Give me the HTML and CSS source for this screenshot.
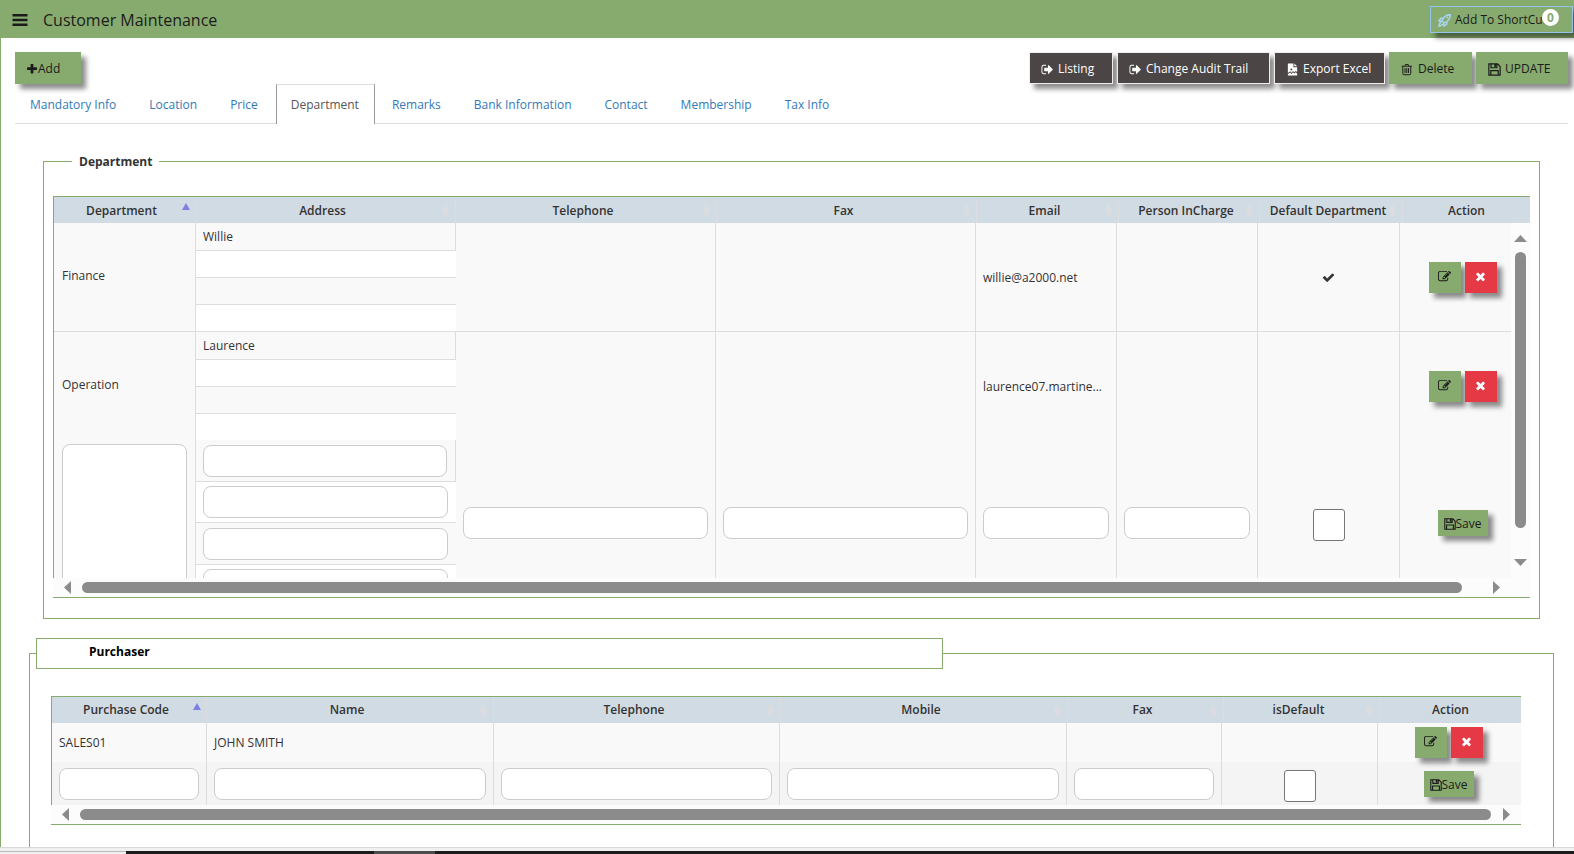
FILE: index.html
```
<!DOCTYPE html>
<html lang="en">
<head>
    <meta charset="UTF-8">
    <meta name="viewport" content="width=device-width, initial-scale=1.0">
    <title>Customer Maintenance</title>
    <link rel="stylesheet" href="styles.css">
</head>
<body>
    <!-- icon set -->
    <svg class="icon-defs" aria-hidden="true">
        <symbol id="i-bars" viewBox="0 0 16 14"><path d="M0.5 1h15v2.4h-15zM0.5 5.8h15v2.4h-15zM0.5 10.6h15V13h-15z"/></symbol>
        <symbol id="i-plus" viewBox="192 192 1408 1408"><path d="M1600 736v192q0 40-28 68t-68 28h-416v416q0 40-28 68t-68 28h-192q-40 0-68-28t-28-68v-416h-416q-40 0-68-28t-28-68v-192q0-40 28-68t68-28h416v-416q0-40 28-68t68-28h192q40 0 68 28t28 68v416h416q40 0 68 28t28 68z"/></symbol>
        <symbol id="i-times" viewBox="0 0 1792 1792"><path d="M1490 1322q0 40-28 68l-136 136q-28 28-68 28t-68-28l-294-294-294 294q-28 28-68 28t-68-28l-136-136q-28-28-28-68t28-68l294-294-294-294q-28-28-28-68t28-68l136-136q28-28 68-28t68 28l294 294 294-294q28-28 68-28t68 28l136 136q28 28 28 68t-28 68l-294 294 294 294q28 28 28 68z"/></symbol>
        <symbol id="i-check" viewBox="0 0 1792 1792"><path d="M1671 566q0 40-28 68l-724 724-136 136q-28 28-68 28t-68-28l-136-136-362-362q-28-28-28-68t28-68l136-136q28-28 68-28t68 28l294 295 656-657q28-28 68-28t68 28l136 136q28 28 28 68z"/></symbol>
        <symbol id="i-signout" viewBox="0 0 1792 1792"><path d="M704 1440q0 4 1 20t.5 26.5-3 23.5-10 19.5-20.5 6.5h-320q-119 0-203.5-84.5t-84.5-203.5v-704q0-119 84.500-203.500t203.500-84.500h320q13 0 22.500 9.500t9.500 22.500q0 4 1 20t.5 26.500-3 23.500-10 19.500-20.500 6.500h-320q-66 0-113 47t-47 113v704q0 66 47 113t113 47h312l11.500 1 11.500 3 8 5.500 7 9 2 13.500zm928-544q0 26-19 45l-544 544q-19 19-45 19t-45-19-19-45v-288h-448q-26 0-45-19t-19-45v-384q0-26 19-45t45-19h448v-288q0-26 19-45t45-19 45 19l544 544q19 19 19 45z"/></symbol>
        <symbol id="i-edit" viewBox="0 0 1792 1792"><path d="M888 1184l116-116-152-152-116 116v56h96v96h56zm440-720q-16-16-33 1l-350 350q-17 17-1 33t33-1l350-350q17-17 1-33zm80 594v190q0 119-84.500 203.500t-203.500 84.500h-832q-119 0-203.500-84.500t-84.500-203.500v-832q0-119 84.500-203.500t203.500-84.500h832q63 0 117 25 15 7 18 23 3 17-9 29l-49 49q-14 14-32 8-23-6-45-6h-832q-66 0-113 47t-47 113v832q0 66 47 113t113 47h832q66 0 113-47t47-113v-126q0-13 9-22l64-64q15-15 35-7t20 29zm-96-738l288 288-672 672h-288v-288zm444 132l-92 92-288-288 92-92q28-28 68-28t68 28l152 152q28 28 28 68t-28 68z"/></symbol>
        <symbol id="i-save" viewBox="0 0 12 12"><path fill="none" stroke="currentColor" stroke-width="1.1" d="M.8.8h8l2.400 2.400v8H.8zM2.800.8v3.600h5.400V.8M2.600 11.200V7h6.800v4.200"/><path d="M5.800 1h1.700v2.600H5.800z"/></symbol>
        <symbol id="i-trash" viewBox="0 -0.500 13.500 13"><path fill="none" stroke="currentColor" d="M.6 2.600h10.800M4 2.400l.6-1.600h2.800L8 2.400M1.900 2.800v7.400q0 1.200 1 1.200h6.200q1 0 1-1.200V2.800M4.200 4.600v5M6 4.600v5M7.800 4.600v5"/></symbol>
        <symbol id="i-file" viewBox="0 0 12 14"><path d="M1 .5h6v4h4v5.200L9.500 8.500 8 10 6.500 8.700 5 10.500 3.500 9 1 10.800zM8 .5l3 3H8zM1 12l2.500-1.800L5 11.800 6.500 10 8 11.400 9.500 10 11 11.200v2.300H1z"/><circle cx="4.800" cy="7" r="1" fill="#4b4545"/></symbol>
        <symbol id="i-rocket" viewBox="0 0 14 14"><path fill="none" stroke="currentColor" stroke-width="1.600" d="M13.200.8q-4.600-.2-7.400 3.800L4.200 7.400l2.400 2.400 2.800-1.600q4-2.800 3.800-7.400zM5.800 4.600H3L.9 7.700l3.200.2M9.400 8.200V11l-3.100 2.100-.2-3.200M3.400 9.200Q1.400 9.600 1 13q3.400-.4 3.800-2.400"/><circle cx="10.200" cy="3.800" r="1.100"/></symbol>
    </svg>

    <header class="topbar">
        <button class="menu-btn" aria-label="Menu"><svg class="icon-menu"><use href="#i-bars"/></svg></button>
        <h1>Customer Maintenance</h1>
        <button class="shortcut-btn">
            <svg class="icon rocket"><use href="#i-rocket"/></svg>Add To ShortCut
            <span class="badge">0</span>
        </button>
    </header>

    <main class="page">
        <div class="toolbar">
            <button class="btn btn-add"><svg class="icon-plus"><use href="#i-plus"/></svg>Add</button>
            <div class="toolbar-right">
                <button class="btn btn-dark btn-listing"><svg class="icon"><use href="#i-signout"/></svg>Listing</button>
                <button class="btn btn-dark btn-audit"><svg class="icon"><use href="#i-signout"/></svg>Change Audit Trail</button>
                <button class="btn btn-dark btn-export"><svg class="icon"><use href="#i-file"/></svg>Export Excel</button>
                <button class="btn btn-delete"><svg class="icon"><use href="#i-trash"/></svg>Delete</button>
                <button class="btn btn-update"><svg class="icon"><use href="#i-save"/></svg>UPDATE</button>
            </div>
        </div>

        <nav class="tabs">
            <a href="#">Mandatory Info</a>
            <a href="#">Location</a>
            <a href="#">Price</a>
            <a href="#" class="active">Department</a>
            <a href="#">Remarks</a>
            <a href="#">Bank Information</a>
            <a href="#">Contact</a>
            <a href="#">Membership</a>
            <a href="#">Tax Info</a>
        </nav>

        <!-- Department -->
        <fieldset class="group department">
            <legend>Department</legend>
            <div class="grid">
                <table class="grid-head">
                    <colgroup>
                        <col class="w142"><col class="w260"><col class="w261"><col class="w260">
                        <col class="w142"><col class="w141"><col class="w143"><col class="w127">
                    </colgroup>
                    <tr>
                        <th class="sorted">Department</th>
                        <th>Address</th>
                        <th>Telephone</th>
                        <th>Fax</th>
                        <th>Email</th>
                        <th>Person InCharge</th>
                        <th>Default Department</th>
                        <th class="no-sort">Action</th>
                    </tr>
                </table>
                <div class="grid-body">
                    <div class="grid-view">
                        <table class="grid-rows">
                            <colgroup>
                                <col class="w142"><col class="w260"><col class="w260"><col class="w260">
                                <col class="w141"><col class="w141"><col class="w142"><col class="w127">
                            </colgroup>
                            <tr class="lined">
                                <td class="name">Finance</td>
                                <td class="address">
                                    <div class="line">Willie</div>
                                    <div class="line"></div>
                                    <div class="line"></div>
                                    <div class="line"></div>
                                </td>
                                <td></td>
                                <td></td>
                                <td class="mail">willie@a2000.net</td>
                                <td></td>
                                <td class="center"><svg class="icon"><use href="#i-check"/></svg></td>
                                <td class="action">
                                    <div class="actions">
                                        <button class="btn-icon edit" aria-label="Edit"><svg class="icon"><use href="#i-edit"/></svg></button>
                                        <button class="btn-icon remove" aria-label="Remove"><svg class="icon"><use href="#i-times"/></svg></button>
                                    </div>
                                </td>
                            </tr>
                            <tr>
                                <td class="name">Operation</td>
                                <td class="address">
                                    <div class="line">Laurence</div>
                                    <div class="line"></div>
                                    <div class="line"></div>
                                    <div class="line"></div>
                                </td>
                                <td></td>
                                <td></td>
                                <td class="mail">laurence07.martine...</td>
                                <td></td>
                                <td></td>
                                <td class="action">
                                    <div class="actions">
                                        <button class="btn-icon edit" aria-label="Edit"><svg class="icon"><use href="#i-edit"/></svg></button>
                                        <button class="btn-icon remove" aria-label="Remove"><svg class="icon"><use href="#i-times"/></svg></button>
                                    </div>
                                </td>
                            </tr>
                            <tr class="entry">
                                <td class="wide"><textarea class="field tall" aria-label="Department"></textarea></td>
                                <td class="address">
                                    <div class="line"><input type="text" class="field" aria-label="Address 1"></div>
                                    <div class="line"><input type="text" class="field" aria-label="Address 2"></div>
                                    <div class="line"><input type="text" class="field" aria-label="Address 3"></div>
                                    <div class="line"><input type="text" class="field" aria-label="Address 4"></div>
                                </td>
                                <td><input type="text" class="field" aria-label="Telephone"></td>
                                <td><input type="text" class="field" aria-label="Fax"></td>
                                <td><input type="text" class="field" aria-label="Email"></td>
                                <td><input type="text" class="field" aria-label="Person InCharge"></td>
                                <td class="center"><input type="checkbox" class="check" aria-label="Default Department"></td>
                                <td class="action"><button class="btn-save"><svg class="icon-save"><use href="#i-save"/></svg>Save</button></td>
                            </tr>
                        </table>
                    </div>
                    <div class="vscroll"><i class="arrow up"></i><i class="thumb"></i><i class="arrow down"></i></div>
                </div>
                <div class="hscroll"><i class="arrow left"></i><i class="thumb"></i><i class="arrow right"></i></div>
            </div>
        </fieldset>

        <!-- Purchaser -->
        <fieldset class="group purchaser">
            <legend>Purchaser</legend>
            <div class="grid">
                <table class="grid-head">
                    <colgroup>
                        <col class="w155"><col class="w287"><col class="w287"><col class="w287">
                        <col class="w156"><col class="w156"><col class="w141">
                    </colgroup>
                    <tr>
                        <th class="sorted">Purchase Code</th>
                        <th>Name</th>
                        <th>Telephone</th>
                        <th>Mobile</th>
                        <th>Fax</th>
                        <th>isDefault</th>
                        <th class="no-sort">Action</th>
                    </tr>
                </table>
                <table class="grid-rows">
                    <colgroup>
                        <col class="w155"><col class="w287"><col class="w286"><col class="w287">
                        <col class="w155"><col class="w156"><col class="w143">
                    </colgroup>
                    <tr class="person">
                        <td>SALES01</td>
                        <td>JOHN SMITH</td>
                        <td></td>
                        <td></td>
                        <td></td>
                        <td></td>
                        <td class="action">
                            <div class="actions">
                                <button class="btn-icon edit" aria-label="Edit"><svg class="icon"><use href="#i-edit"/></svg></button>
                                <button class="btn-icon remove" aria-label="Remove"><svg class="icon"><use href="#i-times"/></svg></button>
                            </div>
                        </td>
                    </tr>
                    <tr class="new-person">
                        <td><input type="text" class="field" aria-label="Purchase Code"></td>
                        <td><input type="text" class="field" aria-label="Name"></td>
                        <td><input type="text" class="field" aria-label="Telephone"></td>
                        <td><input type="text" class="field" aria-label="Mobile"></td>
                        <td><input type="text" class="field" aria-label="Fax"></td>
                        <td class="center"><input type="checkbox" class="check" aria-label="isDefault"></td>
                        <td class="action"><button class="btn-save"><svg class="icon-save"><use href="#i-save"/></svg>Save</button></td>
                    </tr>
                </table>
                <div class="hscroll"><i class="arrow left"></i><i class="thumb"></i><i class="arrow right"></i></div>
            </div>
        </fieldset>
    </main>

    <footer class="bottom-edge">
        <div class="dock"><span class="dock-start"></span><span class="dock-active"></span></div>
    </footer>
</body>
</html>
```
FILE: styles.css
```
:root {
    --green: #87ab6e;
    --head: #d1dbe4;
    --line: #dddddd;
    --row: #f9f9f9;
    --scroll: #8b8b8b;
    --shadow: 5px 5px 5px rgba(0, 0, 0, 0.45);
}

* {
    box-sizing: border-box;
}

body {
    margin: 0;
    height: 100vh;
    overflow: hidden;
    display: flex;
    flex-direction: column;
    background: #fff;
    color: #333;
    font: 12px/20px "Open Sans", "Noto Sans", sans-serif;
}

button, input, textarea {
    font: inherit;
    color: inherit;
    margin: 0;
}

button {
    display: flex;
    align-items: center;
    border: 0;
    border-radius: 0;
    padding: 0;
    color: #1b1b1b;
    cursor: pointer;
    white-space: nowrap;
}

svg {
    fill: currentColor;
    flex: none;
}

.icon-defs {
    display: none;
}

.icon {
    width: 13px;
    height: 13px;
}

/* top bar */
.topbar {
    flex: none;
    display: flex;
    align-items: center;
    height: 38px;
    padding: 0 1px 0 12px;
    background: var(--green);
}

.menu-btn {
    background: none;
    margin-right: 15px;
    padding-top: 2px;
}

.icon-menu {
    width: 16px;
    height: 14px;
}

.topbar h1 {
    margin: 0;
    padding-top: 2px;
    font-size: 16px;
    font-weight: 400;
    line-height: 24px;
    color: #1b1b1b;
}

.shortcut-btn {
    position: relative;
    width: 143px;
    height: 27px;
    margin-left: auto;
    padding: 2px 0 0 7px;
    gap: 4px;
    background: var(--green);
    border: 1px solid #94c6ec;
    box-shadow: var(--shadow);
}

.rocket {
    color: #a9d3ef;
}

.badge {
    position: absolute;
    top: 2px;
    right: 13px;
    width: 17px;
    height: 17px;
    border-radius: 50%;
    background: #fff;
    color: var(--green);
    font-weight: 700;
    line-height: 17px;
    text-align: center;
}

/* page */
.page {
    flex: 1;
    min-height: 0;
    overflow: hidden;
    border-left: 1px solid var(--green);
}

.toolbar {
    display: flex;
    justify-content: space-between;
    padding: 14px 6px 0 14px;
}

.toolbar-right {
    display: flex;
    gap: 4px;
}

.btn {
    height: 32px;
    padding: 2px 0 0 12px;
    gap: 4px;
    background: var(--green);
    box-shadow: var(--shadow);
}

.btn-dark {
    padding-left: 11px;
    background: #4b4545;
    border: 1px solid #eee;
    color: #fff;
}

.btn-add { width: 66px; gap: 1px; }
.btn-listing { width: 84px; }
.btn-audit { width: 153px; }
.btn-export { width: 111px; }
.btn-delete { width: 83px; }
.btn-update { width: 92px; }

.icon-plus {
    width: 10px;
    height: 10px;
}

/* tabs */
.tabs {
    display: flex;
    gap: 2px;
    height: 40px;
    margin: 0 6px 0 14px;
    border-bottom: 1px solid var(--line);
}

.tabs a {
    height: 40px;
    padding: 10px 15px 0 14px;
    border: 1px solid transparent;
    border-bottom: 0;
    color: #337ab7;
    text-decoration: none;
    white-space: nowrap;
}

.tabs .active {
    color: #555;
    background: #fff;
    border-color: #ddd #999;
}

/* fieldsets */
.group {
    min-width: 0;
    border: 1px solid var(--green);
}

.department {
    margin: 26px 34px 0 42px;
    padding: 24px 9px 20px;
}

.department legend {
    margin-left: 19px;
    padding: 2px 7px 0;
    font-weight: 700;
}

.purchaser {
    margin: 19px 20px 0 28px;
    padding: 27px 32px 30px 21px;
}

.purchaser legend {
    width: calc(62% - 4px);
    margin-left: -15px;
    padding: 3px 0 6px 52px;
    border: 1px solid var(--green);
    color: #000;
    font-weight: 700;
}

/* grids */
.grid {
    border-top: 1px solid var(--green);
    border-bottom: 1px solid var(--green);
}

table {
    width: 100%;
    table-layout: fixed;
    border-collapse: separate;
    border-spacing: 0;
}

.w127 { width: 127px; }
.w141 { width: 141px; }
.w142 { width: 142px; }
.w143 { width: 143px; }
.w155 { width: 155px; }
.w156 { width: 156px; }
.w260 { width: 260px; }
.w261 { width: 261px; }
.w286 { width: 286px; }
.w287 { width: 287px; }

.grid-head {
    border-left: 1px solid var(--green);
    background: var(--head);
}

th {
    position: relative;
    height: 26px;
    padding: 0 10px 0 4px;
    border-right: 1px solid #dcdde0;
    font-weight: 600;
    white-space: nowrap;
}

.department th {
    padding-top: 2px;
}

/* sort markers */
th::after {
    content: "";
    position: absolute;
    top: 7px;
    right: 6px;
    width: 7px;
    height: 13px;
    background: #dbdcdf;
    clip-path: polygon(50% 0, 100% 45%, 100% 55%, 50% 100%, 0 55%, 0 45%);
}

th.sorted::after {
    top: 6px;
    right: 5px;
    width: 8px;
    height: 7px;
    background: #7d80e0;
    clip-path: polygon(50% 0, 100% 100%, 0 100%);
}

th.no-sort {
    padding-left: 0;
    padding-right: 0;
    border-right: 0;
}

th.no-sort::after {
    display: none;
}

td {
    padding: 0 7px;
    border-right: 1px solid var(--line);
    background: var(--row);
    vertical-align: middle;
}

td.center {
    text-align: center;
}

td.center .icon {
    display: block;
    margin: 0 auto;
}

td.action {
    padding: 0 2px 0 0;
    border-right: 0;
}

td.wide {
    padding: 0 8px;
}

td.name {
    padding: 0 8px 2px;
}

td.mail {
    padding-top: 2px;
}

.lined td {
    border-bottom: 1px solid var(--line);
}

.grid-body {
    display: flex;
    height: 355px;
}

.grid-view {
    flex: 1;
    min-width: 0;
    overflow: hidden;
    border-left: 1px solid var(--green);
}

.grid-view .grid-rows {
    width: calc(100% + 16px);
}

.purchaser .grid-rows {
    border-left: 1px solid var(--green);
}

.person td {
    height: 39px;
}

.new-person td {
    height: 43px;
    background: #f4f4f4;
}

/* address lines */
td.address {
    padding: 0;
    border-right: 0;
}

.line {
    height: 27px;
    padding: 4px 8px 0 7px;
    border-bottom: 1px solid var(--line);
    background: #fff;
}

.line:nth-child(odd) {
    background: var(--row);
}

.line:first-child {
    height: 28px;
    border-right: 1px solid var(--line);
}

.line:last-child {
    height: 26px;
    border-bottom: 0;
}

.entry .line {
    height: 41px;
}

.entry .line:nth-child(odd) {
    height: 42px;
    padding-top: 5px;
}

/* fields */
.field {
    display: block;
    width: 100%;
    height: 32px;
    padding: 4px 8px;
    border: 1px solid #ccc;
    border-radius: 8px;
    background: #fff;
    outline: 0;
}

.field.tall {
    height: 158px;
    resize: none;
}

.check {
    appearance: none;
    display: block;
    width: 32px;
    height: 32px;
    margin: 4px auto 0;
    border: 1px solid #767676;
    border-radius: 3px;
    background: #fff;
}

.check:checked {
    background: var(--green);
}

/* row buttons */
.actions {
    display: flex;
    justify-content: center;
    gap: 4px;
}

.btn-icon {
    justify-content: center;
    width: 32px;
    height: 31px;
    padding-bottom: 2px;
    box-shadow: var(--shadow);
}

.btn-icon.edit {
    background: var(--green);
}

.btn-icon.remove {
    background: #e63946;
    color: #fff;
}

.btn-save {
    justify-content: center;
    width: 50px;
    height: 26px;
    margin: 0 auto;
    padding-top: 2px;
    background: var(--green);
    box-shadow: var(--shadow);
}

.icon-save {
    width: 12px;
    height: 12px;
}

/* scroll tracks */
.vscroll {
    display: flex;
    flex-direction: column;
    align-items: center;
    width: 19px;
    padding: 12px 0;
    background: #fcfcfc;
}

.hscroll {
    display: flex;
    align-items: center;
    height: 19px;
    padding: 0 11px;
    background: #fcfcfc;
}

.department .hscroll {
    padding-right: 30px;
}

.thumb {
    flex: 1;
    border-radius: 6px;
    background: var(--scroll);
}

.vscroll .thumb {
    width: 11px;
    margin: 10px 0 31px;
}

.hscroll .thumb {
    height: 11px;
    margin: 0 12px 0 11px;
}

.department .hscroll .thumb {
    margin-right: 31px;
}

.arrow {
    background: var(--scroll);
}

.arrow.up, .arrow.down {
    width: 13px;
    height: 7px;
}

.arrow.left, .arrow.right {
    width: 7px;
    height: 13px;
}

.arrow.up { clip-path: polygon(50% 0, 100% 100%, 0 100%); }
.arrow.down { clip-path: polygon(0 0, 100% 0, 50% 100%); }
.arrow.left { clip-path: polygon(0 50%, 100% 0, 100% 100%); }
.arrow.right { clip-path: polygon(0 0, 100% 50%, 0 100%); }

/* bottom edge */
.bottom-edge {
    flex: none;
    padding-top: 3px;
    border-top: 1px solid #d9d9d9;
    background: #f0f0f0;
}

.dock {
    display: flex;
    gap: 248px;
    height: 3px;
    background: #1c1c1c;
}

.dock-start {
    width: 126px;
    border-top: 1px solid #bbb;
    background: #f0f0f0;
}

.dock-active {
    width: 61px;
    background: #4c4c4c;
}
```
